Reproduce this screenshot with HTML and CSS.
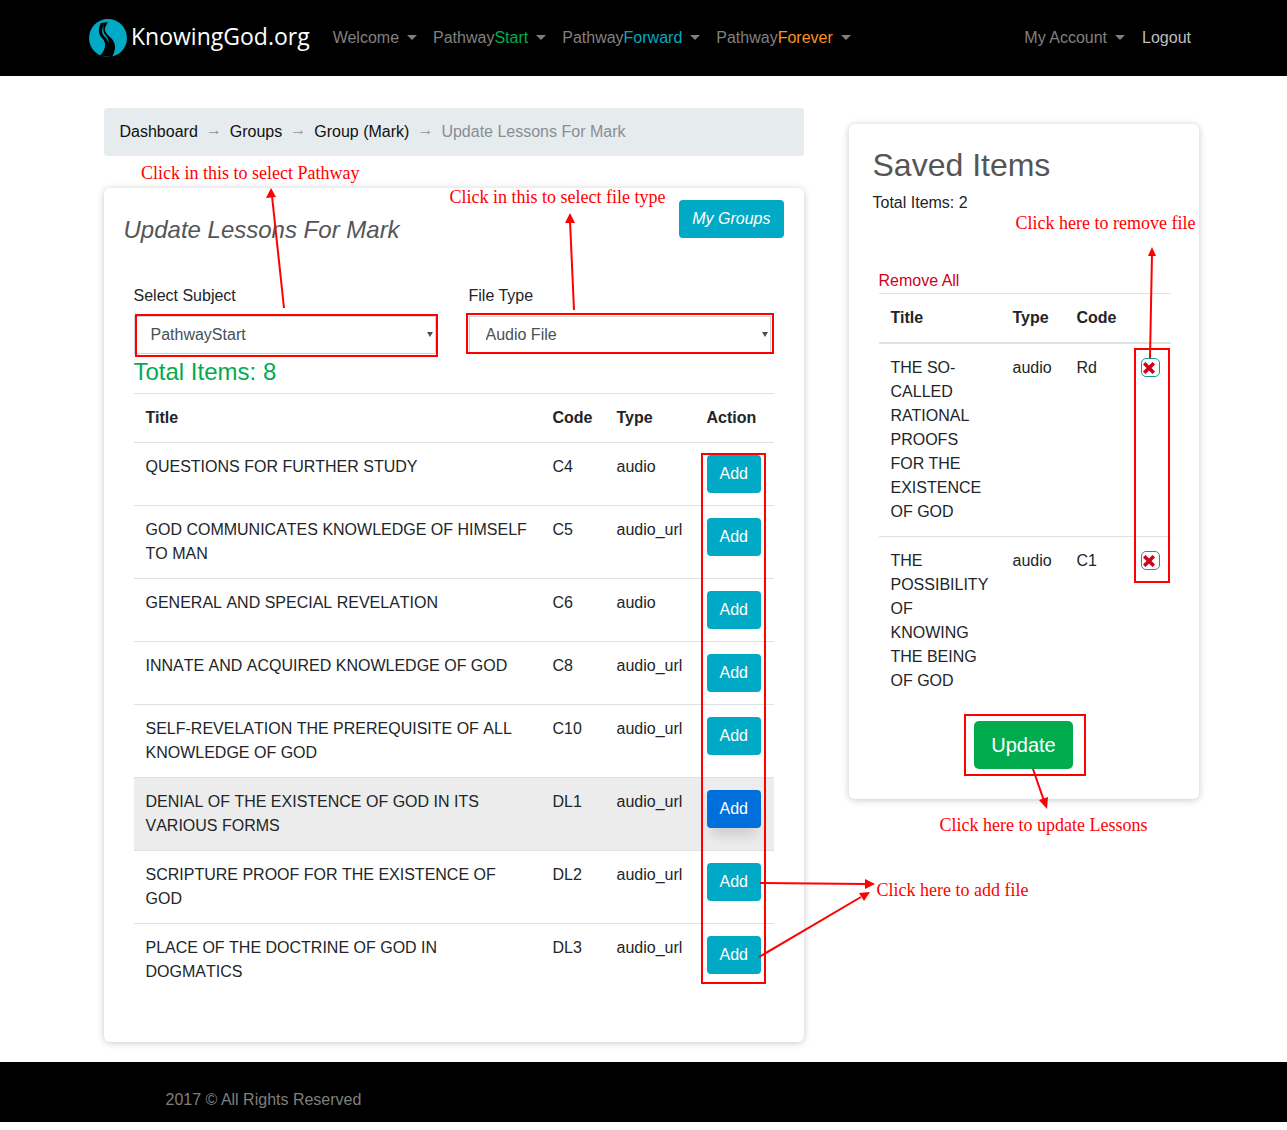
FILE: index.html
```html
<!DOCTYPE html>
<html lang="en">
<head>
    <meta charset="UTF-8">
    <meta name="viewport" content="width=device-width, initial-scale=1.0">
    <title>Update Lessons For Mark</title>
    <link rel="stylesheet" href="styles.css">
</head>
<body>

<nav class="navbar">
    <a class="brand" href="#">
        <svg class="brand-logo" viewBox="0 0 38 38" width="38" height="38">
            <circle cx="19" cy="19" r="19" fill="#00a9c5"/>
            <path d="M12 4C9 9 9 15 13 19C17 23 18 29 11 37L23 38C27 31 27 25 23 20C19 16 15 13 16 9C16.5 7 18 5 19 3Z" fill="#000"/>
            <path d="M15 6C12.5 10 12.5 14 15 17C17 19 19 21 20 25C20 20 17 17 15 14C14 11 14 9 15 6Z" fill="#00a9c5"/>
        </svg>
        <span>KnowingGod.org</span>
    </a>
    <ul class="nav-links">
        <li class="caret">Welcome</li>
        <li class="caret">Pathway<span class="start">Start</span></li>
        <li class="caret">Pathway<span class="forward">Forward</span></li>
        <li class="caret">Pathway<span class="forever">Forever</span></li>
    </ul>
    <ul class="nav-links nav-right">
        <li class="caret">My Account</li>
        <li class="logout">Logout</li>
    </ul>
</nav>

<main class="page">
    <div class="left-col">
        <div class="breadcrumb">
            <a href="#">Dashboard</a><span class="sep">→</span><a href="#">Groups</a><span class="sep">→</span><a href="#">Group (Mark)</a><span class="sep">→</span><span class="current">Update Lessons For Mark</span>
        </div>

        <section class="card lessons">
            <div class="lessons-head">
                <h3>Update Lessons For Mark</h3>
                <a class="btn btn-info btn-italic" href="#">My Groups</a>
            </div>
            <div class="lessons-body">
                <div class="filters">
                    <div>
                        <label for="subject">Select Subject</label>
                        <div class="select-wrap"><select id="subject"><option>PathwayStart</option></select></div>
                    </div>
                    <div>
                        <label for="fileType">File Type</label>
                        <div class="select-wrap"><select id="fileType"><option>Audio File</option></select></div>
                    </div>
                </div>
                <div class="total">Total Items: 8</div>
                <table class="table lesson-table">
                    <thead>
                        <tr><th>Title</th><th>Code</th><th>Type</th><th>Action</th></tr>
                    </thead>
                    <tbody>
                        <tr><td>QUESTIONS FOR FURTHER STUDY</td><td>C4</td><td>audio</td><td><a class="btn btn-info" href="#">Add</a></td></tr>
                        <tr><td>GOD COMMUNICATES KNOWLEDGE OF HIMSELF TO MAN</td><td>C5</td><td>audio_url</td><td><a class="btn btn-info" href="#">Add</a></td></tr>
                        <tr><td>GENERAL AND SPECIAL REVELATION</td><td>C6</td><td>audio</td><td><a class="btn btn-info" href="#">Add</a></td></tr>
                        <tr><td>INNATE AND ACQUIRED KNOWLEDGE OF GOD</td><td>C8</td><td>audio_url</td><td><a class="btn btn-info" href="#">Add</a></td></tr>
                        <tr><td>SELF-REVELATION THE PREREQUISITE OF ALL KNOWLEDGE OF GOD</td><td>C10</td><td>audio_url</td><td><a class="btn btn-info" href="#">Add</a></td></tr>
                        <tr class="hovered"><td>DENIAL OF THE EXISTENCE OF GOD IN ITS VARIOUS FORMS</td><td>DL1</td><td>audio_url</td><td><a class="btn btn-active" href="#">Add</a></td></tr>
                        <tr><td>SCRIPTURE PROOF FOR THE EXISTENCE OF GOD</td><td>DL2</td><td>audio_url</td><td><a class="btn btn-info" href="#">Add</a></td></tr>
                        <tr><td>PLACE OF THE DOCTRINE OF GOD IN DOGMATICS</td><td>DL3</td><td>audio_url</td><td><a class="btn btn-info" href="#">Add</a></td></tr>
                    </tbody>
                </table>
            </div>
        </section>
    </div>

    <aside class="card saved">
        <h2>Saved Items</h2>
        <p class="saved-total">Total Items: 2</p>
        <a class="remove-all" href="#">Remove All</a>
        <table class="table saved-table">
            <thead>
                <tr><th>Title</th><th>Type</th><th>Code</th><th></th></tr>
            </thead>
            <tbody>
                <tr>
                    <td>THE SO-CALLED RATIONAL PROOFS FOR THE EXISTENCE OF GOD</td><td>audio</td><td>Rd</td>
                    <td><a class="btn-remove" href="#"><svg viewBox="0 0 10 10" width="12" height="12"><path d="M1 1L9 9M9 1L1 9" stroke="#d0021b" stroke-width="3" fill="none"/></svg></a></td>
                </tr>
                <tr>
                    <td>THE POSSIBILITY OF KNOWING THE BEING OF GOD</td><td>audio</td><td>C1</td>
                    <td><a class="btn-remove" href="#"><svg viewBox="0 0 10 10" width="12" height="12"><path d="M1 1L9 9M9 1L1 9" stroke="#d0021b" stroke-width="3" fill="none"/></svg></a></td>
                </tr>
            </tbody>
        </table>
        <div class="update-wrap"><a class="btn-update" href="#">Update</a></div>
    </aside>
</main>

<footer class="footer">2017 © All Rights Reserved</footer>

<!-- help annotations drawn over the page -->
<div class="notes">
    <svg class="notes-lines" width="1287" height="1130" viewBox="0 0 1287 1130">
        <g fill="none" stroke="#f00" stroke-width="2">
            <rect x="136" y="315" width="301" height="41"/>
            <rect x="467" y="314" width="306" height="39"/>
            <rect x="702" y="454" width="63" height="529"/>
            <rect x="1135" y="349" width="34" height="233"/>
            <rect x="965" y="715" width="120" height="60"/>
            <path d="M284 308L272 196"/>
            <path d="M574 310L570 221"/>
            <path d="M1150 358L1152 254"/>
            <path d="M1033 769L1044 801"/>
            <path d="M760 883L866 884"/>
            <path d="M759 957L861 897"/>
        </g>
        <g fill="#f00">
            <polygon points="271,188 266,198 276,197"/>
            <polygon points="570,213 565,223 575,223"/>
            <polygon points="1152,247 1148,256 1156,256"/>
            <polygon points="1047,809 1039,800 1048,797"/>
            <polygon points="875,884 865,879 865,889"/>
            <polygon points="870,892 859,893 864,901"/>
        </g>
    </svg>
    <span class="note note-pathway">Click in this to select Pathway</span>
    <span class="note note-type">Click in this to select file type</span>
    <span class="note note-remove">Click here to remove file</span>
    <span class="note note-update">Click here to update Lessons</span>
    <span class="note note-add">Click here to add file</span>
</div>

</body>
</html>
```
FILE: styles.css
```css
* {
    box-sizing: border-box;
}
body {
    margin: 0;
    position: relative;
    min-height: 1130px;
    font-family: "Liberation Sans", Arial, sans-serif;
    font-size: 16px;
    line-height: 24px;
    color: #212529;
    background: #fff;
}
a {
    text-decoration: none;
}
ul {
    list-style: none;
    margin: 0;
    padding: 0;
}

/* navbar */
.navbar {
    display: flex;
    align-items: center;
    height: 76px;
    padding: 0 96px 0 89px;
    background: #000;
}
.brand {
    display: flex;
    align-items: center;
    gap: 4px;
    margin-right: 23px;
    color: #fff;
    font-family: "Open Sans", sans-serif;
    font-size: 23px;
    line-height: 34px;
}
.brand span {
    padding-bottom: 4px;
}
.nav-links {
    display: flex;
    gap: 16px;
    color: #808080;
}
.nav-right {
    gap: 17px;
    margin-left: auto;
}
.caret::after {
    content: "";
    display: inline-block;
    margin-left: 8px;
    vertical-align: 3px;
    border-top: 5px solid #808080;
    border-left: 5px solid transparent;
    border-right: 5px solid transparent;
}
.logout {
    color: #bfbfbf;
}
.start {
    color: #00ac4e;
}
.forward {
    color: #00a9c5;
}
.forever {
    color: #f7941d;
}

/* page columns */
.page {
    display: flex;
    gap: 45px;
    padding: 32px 0 20px 103.5px;
}
.left-col {
    width: 700px;
}
.breadcrumb {
    height: 48px;
    margin-bottom: 32px;
    padding: 12px 16px;
    border-radius: 4px;
    background: #e6ebed;
    white-space: nowrap;
}
.breadcrumb a {
    color: #111;
}
.sep {
    padding: 0 8px;
    line-height: 0;
    vertical-align: 2px;
    color: #8d969d;
}
.current {
    color: #868e96;
}
.card {
    background: #fff;
    border-radius: 6px;
    box-shadow: 0 1px 7px rgba(0, 0, 0, 0.22);
}

/* lessons card */
.lessons {
    height: 854px;
}
.lessons-head {
    display: flex;
    justify-content: space-between;
    align-items: flex-start;
    height: 96px;
    padding: 12px 20px 0;
}
.lessons-head h3 {
    margin: 15px 0 0;
    font-size: 24px;
    font-style: italic;
    font-weight: normal;
    line-height: 29px;
    color: #555;
}
.lessons-body {
    padding: 0 30px;
}
.filters {
    display: grid;
    grid-template-columns: 302px 302px;
    gap: 33px;
}
.filters label {
    display: block;
    margin-bottom: 8px;
}
.select-wrap {
    position: relative;
}
.select-wrap::after {
    content: "";
    position: absolute;
    top: 16px;
    right: 3px;
    border-top: 5px solid #495057;
    border-left: 3px solid transparent;
    border-right: 3px solid transparent;
}
.filters select {
    display: block;
    width: 100%;
    height: 38px;
    padding: 4px 16px 6px;
    appearance: none;
    border: 1px solid #ced4da;
    border-radius: 0;
    background: #fff;
    color: #495057;
    font-family: inherit;
    font-size: 16px;
}
.total {
    margin: 3px 0 7px;
    font-size: 24px;
    line-height: 29px;
    color: #00ac4e;
}

/* tables */
.table {
    width: 100%;
    border-collapse: collapse;
    table-layout: fixed;
}
.table th,
.table td {
    padding: 12px;
    border-top: 1px solid #dee2e6;
    text-align: left;
    vertical-align: top;
}
.lesson-table td {
    font-kerning: none;
}
.lesson-table th:nth-child(1) {
    width: 407px;
}
.lesson-table th:nth-child(2) {
    width: 64px;
}
.lesson-table th:nth-child(3) {
    width: 90px;
}
.hovered td {
    background: #ececec;
}
.saved-table {
    width: 292px;
    margin-left: 6px;
}
.saved-table th:nth-child(1) {
    width: 122px;
}
.saved-table th:nth-child(2),
.saved-table th:nth-child(3) {
    width: 64px;
}
.saved-table thead th {
    border-bottom: 2px solid #dee2e6;
}
.saved-table tbody tr:first-child td {
    border-top: 0;
}

/* buttons */
.btn {
    display: inline-block;
    height: 38px;
    padding: 7px 13px;
    border-radius: 4px;
    color: #fff;
}
.btn-info {
    background: #00a9c5;
}
.btn-italic {
    font-style: italic;
}
.btn-active {
    background: #006fdc;
    box-shadow: 0 12px 12px -4px rgba(0, 0, 0, 0.12);
}
.btn-remove {
    display: flex;
    align-items: center;
    width: 19px;
    height: 19px;
    margin-top: 2px;
    padding-left: 1px;
    border: 1px solid #1d9a84;
    border-radius: 5px;
}
.btn-update {
    display: block;
    width: 99px;
    height: 48px;
    border-radius: 5px;
    background: #00ac4e;
    color: #fff;
    font-size: 20px;
    line-height: 48px;
    text-align: center;
}

/* saved card */
.saved {
    width: 350px;
    height: 675px;
    margin-top: 16px;
    padding: 22px 24px 0;
}
.saved h2 {
    margin: 0 0 7px;
    font-size: 32px;
    font-weight: normal;
    line-height: 38px;
    color: #555;
}
.saved-total {
    margin: 0 0 54px;
}
.remove-all {
    display: block;
    height: 24px;
    margin-left: 6px;
    color: #d0021b;
}
.update-wrap {
    display: flex;
    justify-content: center;
    margin-top: 16px;
}

/* footer */
.footer {
    height: 60px;
    padding: 26px 0 0 165.5px;
    background: #000;
    color: #7f7f7f;
}

/* annotations sit over the page */
.notes {
    position: absolute;
    top: 0;
    left: 0;
    width: 1287px;
    height: 1130px;
    pointer-events: none;
}
.notes-lines {
    position: absolute;
    top: 0;
    left: 0;
}
.note {
    position: absolute;
    font-family: "Liberation Serif", "Times New Roman", serif;
    font-size: 18px;
    line-height: 20px;
    color: #f00;
    white-space: nowrap;
}
.note-pathway {
    top: 163px;
    left: 141px;
}
.note-type {
    top: 187px;
    left: 449.5px;
}
.note-remove {
    top: 213px;
    left: 1015.5px;
}
.note-update {
    top: 815px;
    left: 939.5px;
}
.note-add {
    top: 880px;
    left: 876.5px;
}
```
